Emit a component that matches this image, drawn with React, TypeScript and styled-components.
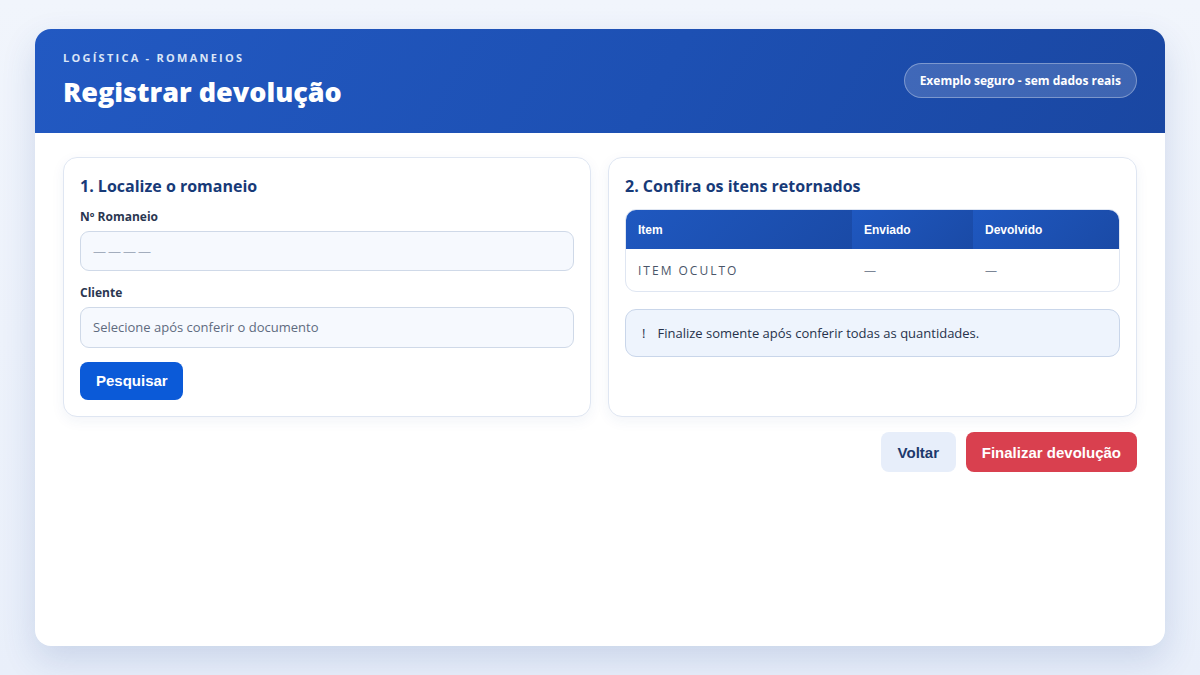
import React from 'react'
import styled, { createGlobalStyle } from 'styled-components'

const GlobalStyle = createGlobalStyle`
  html, body {
    margin: 0;
    padding: 0;
  }
  body {
    background: linear-gradient(180deg, #f1f5fc 0%, #e9effa 100%);
    font-family: 'Open Sans', 'Noto Sans', sans-serif;
    color: #1f2d45;
  }
  * {
    box-sizing: border-box;
  }
`

const Page = styled.div`
  width: 1200px;
  height: 675px;
  padding: 29px 35px;
`

const Shell = styled.div`
  height: 617px;
  background: #ffffff;
  border-radius: 16px;
  overflow: hidden;
  box-shadow: 0 14px 34px rgba(40, 76, 150, 0.16);
  display: flex;
  flex-direction: column;
`

const Header = styled.header`
  height: 104px;
  padding: 0 28px;
  background: linear-gradient(120deg, #2259c2 0%, #1d50b3 55%, #1a47a2 100%);
  display: flex;
  align-items: center;
  justify-content: space-between;
`

const TitleBlock = styled.div`
  display: flex;
  flex-direction: column;
  gap: 9px;
  margin-top: -1px;
`

const Eyebrow = styled.span`
  font-family: 'Open Sans', 'Noto Sans', sans-serif;
  font-size: 11px;
  line-height: 14px;
  font-weight: 700;
  letter-spacing: 2.25px;
  color: #dbe5f7;
`

const Title = styled.h1`
  margin: 0;
  font-family: 'Open Sans', 'Noto Sans', sans-serif;
  font-size: 27px;
  font-weight: 800;
  line-height: 36px;
  color: #ffffff;
`

const Badge = styled.span`
  height: 35px;
  padding: 0 15px;
  display: flex;
  align-items: center;
  border-radius: 999px;
  background: rgba(255, 255, 255, 0.16);
  border: 1px solid rgba(255, 255, 255, 0.32);
  font-family: 'Open Sans', 'Noto Sans', sans-serif;
  font-size: 12px;
  font-weight: 700;
  color: #ffffff;
  margin-top: -2px;
`

const Body = styled.main`
  padding: 24px 28px;
  display: flex;
  flex-direction: column;
  gap: 15px;
`

const Columns = styled.div`
  display: grid;
  grid-template-columns: 528px 529px;
  gap: 17px;
`

const Panel = styled.section`
  height: 260px;
  padding: 16px 16px;
  border: 1px solid #dfe6f2;
  border-radius: 14px;
  background: #ffffff;
  box-shadow: 0 4px 14px rgba(38, 70, 140, 0.06);
  display: flex;
  flex-direction: column;
`

const PanelTitle = styled.h2`
  margin: 0 0 11px;
  font-family: 'Open Sans', 'Noto Sans', sans-serif;
  font-size: 16px;
  font-weight: 700;
  line-height: 24px;
  color: #173a78;
`

const Label = styled.label`
  font-family: 'Open Sans', 'Noto Sans', sans-serif;
  font-size: 12px;
  font-weight: 700;
  color: #2a3650;
  line-height: 16px;
  margin-bottom: 6px;
`

const Field = styled.div`
  height: 42px;
  margin-bottom: 14px;
  padding: 0 12px;
  display: flex;
  align-items: center;
  border: 1px solid #cfd9e8;
  border-radius: 9px;
  background: #f6f9fe;
  font-size: 13px;
  color: #5f6b7e;
`

const Dashes = styled.span`
  color: #a3adbd;
  letter-spacing: 2px;
`

const Button = styled.button<{ $tone: 'primary' | 'ghost' | 'danger' }>`
  height: 40px;
  padding: 0 16px;
  border: none;
  border-radius: 8px;
  font-family: 'Liberation Sans', Arial, sans-serif;
  font-size: 15px;
  font-weight: 700;
  cursor: pointer;
  background: ${p =>
    p.$tone === 'primary' ? '#0b5ad8' : p.$tone === 'danger' ? '#d9404f' : '#e7eefa'};
  color: ${p => (p.$tone === 'ghost' ? '#1c396c' : '#ffffff')};
`

const SearchButton = styled(Button)`
  align-self: flex-start;
  width: 103px;
`

const BackButton = styled(Button)`
  width: 75px;
  padding: 0;
`

const Table = styled.div`
  border: 1px solid #dfe6f2;
  border-radius: 11px;
  overflow: hidden;
  display: grid;
  grid-template-columns: 226px 121px 1fr;
`

const HeadCell = styled.div`
  height: 39px;
  padding: 0 12px;
  display: flex;
  align-items: center;
  background: linear-gradient(135deg, #1f58c0 0%, #1a4aa6 100%);
  font-family: 'Liberation Sans', Arial, sans-serif;
  font-size: 12px;
  font-weight: 700;
  color: #ffffff;
`

const Cell = styled.div<{ $muted?: boolean }>`
  height: 42px;
  padding: 0 12px;
  display: flex;
  align-items: center;
  font-size: 12px;
  color: ${p => (p.$muted ? '#7b8595' : '#4a5568')};
  letter-spacing: ${p => (p.$muted ? '0' : '2px')};
`

const Note = styled.div`
  margin-top: 17px;
  height: 48px;
  padding: 0 16px;
  display: flex;
  align-items: center;
  gap: 12px;
  border: 1px solid #c9d6ea;
  border-radius: 11px;
  background: #eef4fd;
  font-size: 13px;
  color: #26324b;
`

const Actions = styled.div`
  display: flex;
  justify-content: flex-end;
  gap: 10px;
`

export default function App() {
  return (
    <>
      <GlobalStyle />
      <Page>
        <Shell>
          <Header>
            <TitleBlock>
              <Eyebrow>LOGÍSTICA - ROMANEIOS</Eyebrow>
              <Title>Registrar devolução</Title>
            </TitleBlock>
            <Badge>Exemplo seguro - sem dados reais</Badge>
          </Header>

          <Body>
            <Columns>
              <Panel>
                <PanelTitle>1. Localize o romaneio</PanelTitle>
                <Label>Nº Romaneio</Label>
                <Field>
                  <Dashes>————</Dashes>
                </Field>
                <Label>Cliente</Label>
                <Field>Selecione após conferir o documento</Field>
                <SearchButton $tone="primary">Pesquisar</SearchButton>
              </Panel>

              <Panel>
                <PanelTitle>2. Confira os itens retornados</PanelTitle>
                <Table>
                  <HeadCell>Item</HeadCell>
                  <HeadCell>Enviado</HeadCell>
                  <HeadCell>Devolvido</HeadCell>
                  <Cell>ITEM OCULTO</Cell>
                  <Cell $muted>—</Cell>
                  <Cell $muted>—</Cell>
                </Table>
                <Note>
                  <span>!</span>
                  <span>Finalize somente após conferir todas as quantidades.</span>
                </Note>
              </Panel>
            </Columns>

            <Actions>
              <BackButton $tone="ghost">Voltar</BackButton>
              <Button $tone="danger">Finalizar devolução</Button>
            </Actions>
          </Body>
        </Shell>
      </Page>
    </>
  )
}
